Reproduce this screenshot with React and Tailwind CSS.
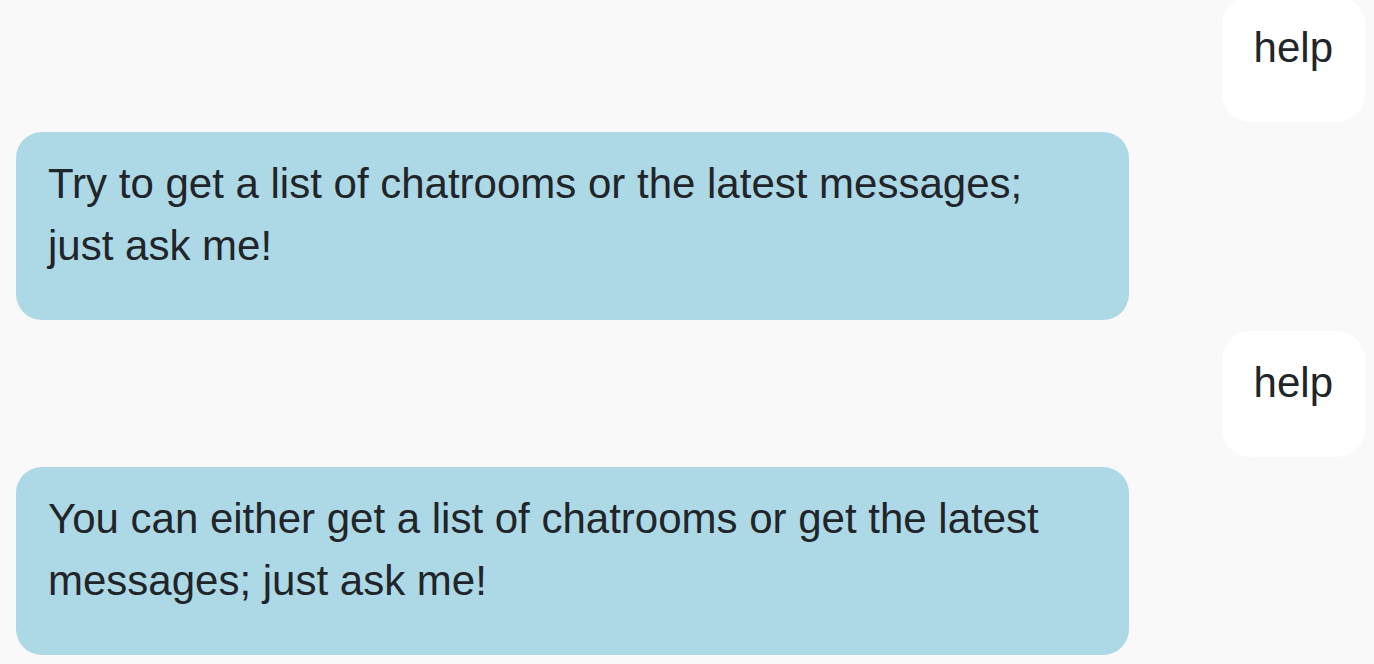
import React from 'react';

// Chat transcript, scrolled to the latest message
const messages = [
  { from: 'user', text: 'help' },
  { from: 'bot', text: 'Try to get a list of chatrooms or the latest messages; just ask me!' },
  { from: 'user', text: 'help' },
  { from: 'bot', text: 'You can either get a list of chatrooms or get the latest messages; just ask me!' },
];

const Bubble = ({ from, text }) => {
  if (from === 'user') {
    return (
      <div className="flex justify-end">
        <div className="bg-white rounded-[28px] px-8 pt-[21px] pb-[43px]">{text}</div>
      </div>
    );
  }
  return (
    <div className="flex justify-start">
      <div className="w-[1113px] bg-[#add8e6] rounded-[26px] px-8 pt-[21px] pb-[43px]">{text}</div>
    </div>
  );
};

export default function App() {
  return (
    <div
      className="h-screen overflow-hidden bg-[#f9f9f9] text-[#212529] text-[42px] leading-[62px] flex flex-col justify-end gap-[10.5px] pl-4 pr-[9px] pb-[9px]"
      style={{ fontFamily: '"Liberation Sans", Arial, sans-serif' }}
    >
      {messages.map((m, i) => (
        <Bubble key={i} from={m.from} text={m.text} />
      ))}
    </div>
  );
}
